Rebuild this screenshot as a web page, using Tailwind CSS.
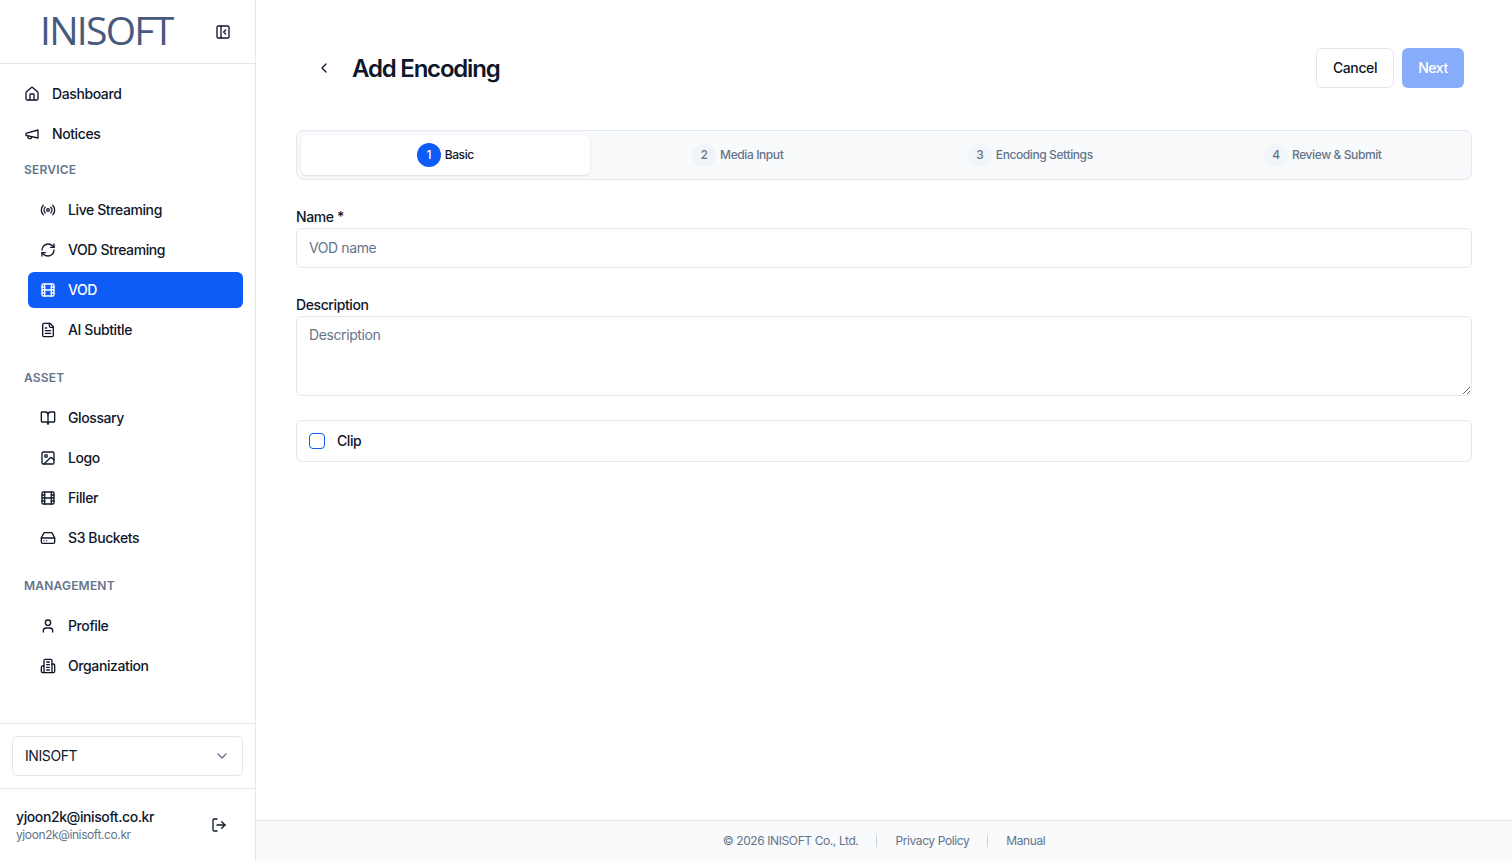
<!DOCTYPE html>
<html lang="en">
<head>
  <meta charset="UTF-8" />
  <meta name="viewport" content="width=device-width, initial-scale=1" />
  <title>Add Encoding</title>
  <script src="https://cdn.jsdelivr.net/npm/@tailwindcss/browser@4"></script>
</head>
<body class="h-screen overflow-hidden bg-white text-[#0f172a] tracking-tight font-[Inter,sans-serif]">
  <div class="flex h-[861px]">
    <!-- sidebar -->
    <aside class="w-[256px] shrink-0 flex flex-col border-r border-[#e2e8f0] bg-white">
      <div class="h-[64px] shrink-0 flex items-center border-b border-[#e2e8f0] pl-[40px] pr-[24px] justify-between">
        <span class="-mt-1 text-[39px] leading-none font-medium text-[#475a7d] font-['Open_Sans',sans-serif] tracking-[-1.7px]">INISOFT</span>
        <svg class="w-4 h-4" viewBox="0 0 24 24" fill="none" stroke="currentColor" stroke-width="2" stroke-linecap="round" stroke-linejoin="round"><rect x="3" y="3" width="18" height="18" rx="2"/><path d="M9 3v18"/><path d="m16 15-3-3 3-3"/></svg>
      </div>

      <nav class="flex-1 px-[12px] pt-[12px] text-sm font-medium">
        <div class="flex flex-col gap-1">
          <a class="h-9 flex items-center gap-3 pl-[12px] rounded-md">
            <svg class="w-4 h-4" viewBox="0 0 24 24" fill="none" stroke="currentColor" stroke-width="2" stroke-linecap="round" stroke-linejoin="round"><path d="M15 21v-8a1 1 0 0 0-1-1h-4a1 1 0 0 0-1 1v8"/><path d="M3 10a2 2 0 0 1 .709-1.528l7-5.999a2 2 0 0 1 2.582 0l7 5.999A2 2 0 0 1 21 10v9a2 2 0 0 1-2 2H5a2 2 0 0 1-2-2z"/></svg>
            Dashboard
          </a>
          <a class="h-9 flex items-center gap-3 pl-[12px] rounded-md">
            <svg class="w-4 h-4" viewBox="0 0 24 24" fill="none" stroke="currentColor" stroke-width="2" stroke-linecap="round" stroke-linejoin="round"><path d="m3 11 18-5v12L3 14v-3z"/><path d="M11.6 16.8a3 3 0 1 1-5.8-1.6"/></svg>
            Notices
          </a>
        </div>

        <p class="mt-[8px] mb-[12px] h-5 leading-5 pl-[12px] text-xs font-semibold tracking-[0.2px] text-[#64748b]">SERVICE</p>
        <div class="flex flex-col gap-1 pl-[16px]">
          <a class="h-9 flex items-center gap-3 pl-[12px] rounded-md">
            <svg class="w-4 h-4" viewBox="0 0 24 24" fill="none" stroke="currentColor" stroke-width="2" stroke-linecap="round" stroke-linejoin="round"><path d="M4.9 19.1C1 15.2 1 8.8 4.9 4.9"/><path d="M7.8 16.2c-2.3-2.3-2.3-6.1 0-8.5"/><circle cx="12" cy="12" r="2"/><path d="M16.2 7.8c2.3 2.3 2.3 6.1 0 8.5"/><path d="M19.1 4.9C23 8.8 23 15.1 19.1 19"/></svg>
            Live Streaming
          </a>
          <a class="h-9 flex items-center gap-3 pl-[12px] rounded-md">
            <svg class="w-4 h-4" viewBox="0 0 24 24" fill="none" stroke="currentColor" stroke-width="2" stroke-linecap="round" stroke-linejoin="round"><path d="M3 12a9 9 0 0 1 9-9 9.75 9.75 0 0 1 6.74 2.74L21 8"/><path d="M21 3v5h-5"/><path d="M21 12a9 9 0 0 1-9 9 9.75 9.75 0 0 1-6.74-2.74L3 16"/><path d="M8 16H3v5"/></svg>
            VOD Streaming
          </a>
          <a class="h-9 flex items-center gap-3 pl-[12px] rounded-md bg-[#0f5bf5] text-white">
            <svg class="w-4 h-4" viewBox="0 0 24 24" fill="none" stroke="currentColor" stroke-width="2" stroke-linecap="round" stroke-linejoin="round"><rect x="3" y="3" width="18" height="18" rx="2"/><path d="M7 3v18"/><path d="M3 7.5h4"/><path d="M3 12h18"/><path d="M3 16.5h4"/><path d="M17 3v18"/><path d="M17 7.5h4"/><path d="M17 16.5h4"/></svg>
            VOD
          </a>
          <a class="h-9 flex items-center gap-3 pl-[12px] rounded-md">
            <svg class="w-4 h-4" viewBox="0 0 24 24" fill="none" stroke="currentColor" stroke-width="2" stroke-linecap="round" stroke-linejoin="round"><path d="M15 2H6a2 2 0 0 0-2 2v16a2 2 0 0 0 2 2h12a2 2 0 0 0 2-2V7Z"/><path d="M14 2v4a2 2 0 0 0 2 2h4"/><path d="M10 9H8"/><path d="M16 13H8"/><path d="M16 17H8"/></svg>
            AI Subtitle
          </a>
        </div>

        <p class="mt-[20px] mb-[12px] h-5 leading-5 pl-[12px] text-xs font-semibold tracking-[0.2px] text-[#64748b]">ASSET</p>
        <div class="flex flex-col gap-1 pl-[16px]">
          <a class="h-9 flex items-center gap-3 pl-[12px] rounded-md">
            <svg class="w-4 h-4" viewBox="0 0 24 24" fill="none" stroke="currentColor" stroke-width="2" stroke-linecap="round" stroke-linejoin="round"><path d="M12 7v14"/><path d="M3 18a1 1 0 0 1-1-1V4a1 1 0 0 1 1-1h5a4 4 0 0 1 4 4 4 4 0 0 1 4-4h5a1 1 0 0 1 1 1v13a1 1 0 0 1-1 1h-6a3 3 0 0 0-3 3 3 3 0 0 0-3-3z"/></svg>
            Glossary
          </a>
          <a class="h-9 flex items-center gap-3 pl-[12px] rounded-md">
            <svg class="w-4 h-4" viewBox="0 0 24 24" fill="none" stroke="currentColor" stroke-width="2" stroke-linecap="round" stroke-linejoin="round"><rect x="3" y="3" width="18" height="18" rx="2"/><circle cx="9" cy="9" r="2"/><path d="m21 15-3.086-3.086a2 2 0 0 0-2.828 0L6 21"/></svg>
            Logo
          </a>
          <a class="h-9 flex items-center gap-3 pl-[12px] rounded-md">
            <svg class="w-4 h-4" viewBox="0 0 24 24" fill="none" stroke="currentColor" stroke-width="2" stroke-linecap="round" stroke-linejoin="round"><rect x="3" y="3" width="18" height="18" rx="2"/><path d="M7 3v18"/><path d="M3 7.5h4"/><path d="M3 12h18"/><path d="M3 16.5h4"/><path d="M17 3v18"/><path d="M17 7.5h4"/><path d="M17 16.5h4"/></svg>
            Filler
          </a>
          <a class="h-9 flex items-center gap-3 pl-[12px] rounded-md">
            <svg class="w-4 h-4" viewBox="0 0 24 24" fill="none" stroke="currentColor" stroke-width="2" stroke-linecap="round" stroke-linejoin="round"><path d="M22 12H2"/><path d="M5.45 5.11 2 12v6a2 2 0 0 0 2 2h16a2 2 0 0 0 2-2v-6l-3.45-6.89A2 2 0 0 0 16.76 4H7.24a2 2 0 0 0-1.79 1.11z"/><path d="M6 16h.01"/><path d="M10 16h.01"/></svg>
            S3 Buckets
          </a>
        </div>

        <p class="mt-[20px] mb-[12px] h-5 leading-5 pl-[12px] text-xs font-semibold tracking-[0.2px] text-[#64748b]">MANAGEMENT</p>
        <div class="flex flex-col gap-1 pl-[16px]">
          <a class="h-9 flex items-center gap-3 pl-[12px] rounded-md">
            <svg class="w-4 h-4" viewBox="0 0 24 24" fill="none" stroke="currentColor" stroke-width="2" stroke-linecap="round" stroke-linejoin="round"><path d="M19 21v-2a4 4 0 0 0-4-4H9a4 4 0 0 0-4 4v2"/><circle cx="12" cy="7" r="4"/></svg>
            Profile
          </a>
          <a class="h-9 flex items-center gap-3 pl-[12px] rounded-md">
            <svg class="w-4 h-4" viewBox="0 0 24 24" fill="none" stroke="currentColor" stroke-width="2" stroke-linecap="round" stroke-linejoin="round"><path d="M6 22V4a2 2 0 0 1 2-2h8a2 2 0 0 1 2 2v18Z"/><path d="M6 12H4a2 2 0 0 0-2 2v6a2 2 0 0 0 2 2h2"/><path d="M18 9h2a2 2 0 0 1 2 2v9a2 2 0 0 1-2 2h-2"/><path d="M10 6h4"/><path d="M10 10h4"/><path d="M10 14h4"/><path d="M10 18h4"/></svg>
            Organization
          </a>
        </div>
      </nav>

      <div class="h-[65px] shrink-0 border-t border-[#e2e8f0] px-[12px] pt-[12px]">
        <div class="h-10 flex items-center justify-between rounded-md border border-[#e2e8f0] px-[12px] text-sm">
          INISOFT
          <svg class="w-4 h-4 text-[#64748b]" viewBox="0 0 24 24" fill="none" stroke="currentColor" stroke-width="2" stroke-linecap="round" stroke-linejoin="round"><path d="m6 9 6 6 6-6"/></svg>
        </div>
      </div>

      <div class="h-[73px] shrink-0 border-t border-[#e2e8f0] pl-[16px] pr-[28px] flex items-center justify-between">
        <div>
          <p class="text-sm leading-5 font-medium">yjoon2k@inisoft.co.kr</p>
          <p class="text-xs leading-4 text-[#64748b]">yjoon2k@inisoft.co.kr</p>
        </div>
        <svg class="w-4 h-4" viewBox="0 0 24 24" fill="none" stroke="currentColor" stroke-width="2" stroke-linecap="round" stroke-linejoin="round"><path d="M9 21H5a2 2 0 0 1-2-2V5a2 2 0 0 1 2-2h4"/><path d="m16 17 5-5-5-5"/><path d="M21 12H9"/></svg>
      </div>
    </aside>

    <!-- main -->
    <div class="flex-1 flex flex-col min-w-0">
      <main class="flex-1 px-[40px] pt-[48px]">
        <div class="h-10 flex items-center justify-between pl-[20px] pr-[8px]">
          <div class="flex items-center">
            <svg class="w-4 h-4 mr-[20px]" viewBox="0 0 24 24" fill="none" stroke="currentColor" stroke-width="2" stroke-linecap="round" stroke-linejoin="round"><path d="m15 18-6-6 6-6"/></svg>
            <h1 class="mt-[2px] text-2xl font-semibold tracking-[-1.2px]">Add Encoding</h1>
          </div>
          <div class="flex gap-2 text-sm font-medium">
            <button class="h-10 w-[78px] rounded-md border border-[#e2e8f0] bg-white">Cancel</button>
            <button class="h-10 w-[62px] rounded-md bg-[#0f5bf5]/50 text-white">Next</button>
          </div>
        </div>

        <div class="mt-[42px] h-[50px] grid grid-cols-4 gap-1 p-1 rounded-lg border border-[#e2e8f0] bg-[#f8fafc] text-xs font-medium">
          <div class="flex items-center justify-center gap-1 rounded-md bg-white shadow-sm">
            <span class="w-6 h-6 rounded-full bg-[#0f5bf5] text-white flex items-center justify-center">1</span>
            Basic
          </div>
          <div class="flex items-center justify-center gap-1 rounded-md text-[#64748b]">
            <span class="w-6 h-6 rounded-full bg-[#f1f5f9] flex items-center justify-center">2</span>
            Media Input
          </div>
          <div class="flex items-center justify-center gap-1 rounded-md text-[#64748b]">
            <span class="w-6 h-6 rounded-full bg-[#f1f5f9] flex items-center justify-center">3</span>
            Encoding Settings
          </div>
          <div class="flex items-center justify-center gap-1 rounded-md text-[#64748b]">
            <span class="w-6 h-6 rounded-full bg-[#f1f5f9] flex items-center justify-center">4</span>
            Review &amp; Submit
          </div>
        </div>

        <label class="block mt-[27px] text-sm font-medium leading-[20px] mb-[1px]">Name *</label>
        <input type="text" placeholder="VOD name" class="block w-full h-10 px-3 pb-[2px] rounded-md border border-[#e2e8f0] text-sm bg-white placeholder:text-[#64748b] outline-none" />

        <label class="block mt-[27px] text-sm font-medium leading-[20px] mb-[1px]">Description</label>
        <textarea placeholder="Description" class="block w-full h-20 px-3 py-2 rounded-md border border-[#e2e8f0] text-sm bg-white placeholder:text-[#64748b] outline-none resize-y"></textarea>

        <div class="mt-6 h-[42px] flex items-center gap-3 px-3 rounded-md border border-[#e2e8f0]">
          <span class="w-4 h-4 rounded border border-[#0f5bf5] bg-white"></span>
          <span class="text-sm font-medium">Clip</span>
        </div>
      </main>

      <footer class="h-[41px] shrink-0 border-t border-[#e2e8f0] bg-[#f8fafc] flex items-center justify-center text-xs text-[#64748b]">
        <span>© 2026 INISOFT Co., Ltd.</span>
        <span class="w-px h-3 bg-[#cbd5e1] mx-[18px]"></span>
        <a>Privacy Policy</a>
        <span class="w-px h-3 bg-[#cbd5e1] mx-[18px]"></span>
        <a>Manual</a>
      </footer>
    </div>
  </div>
</body>
</html>
